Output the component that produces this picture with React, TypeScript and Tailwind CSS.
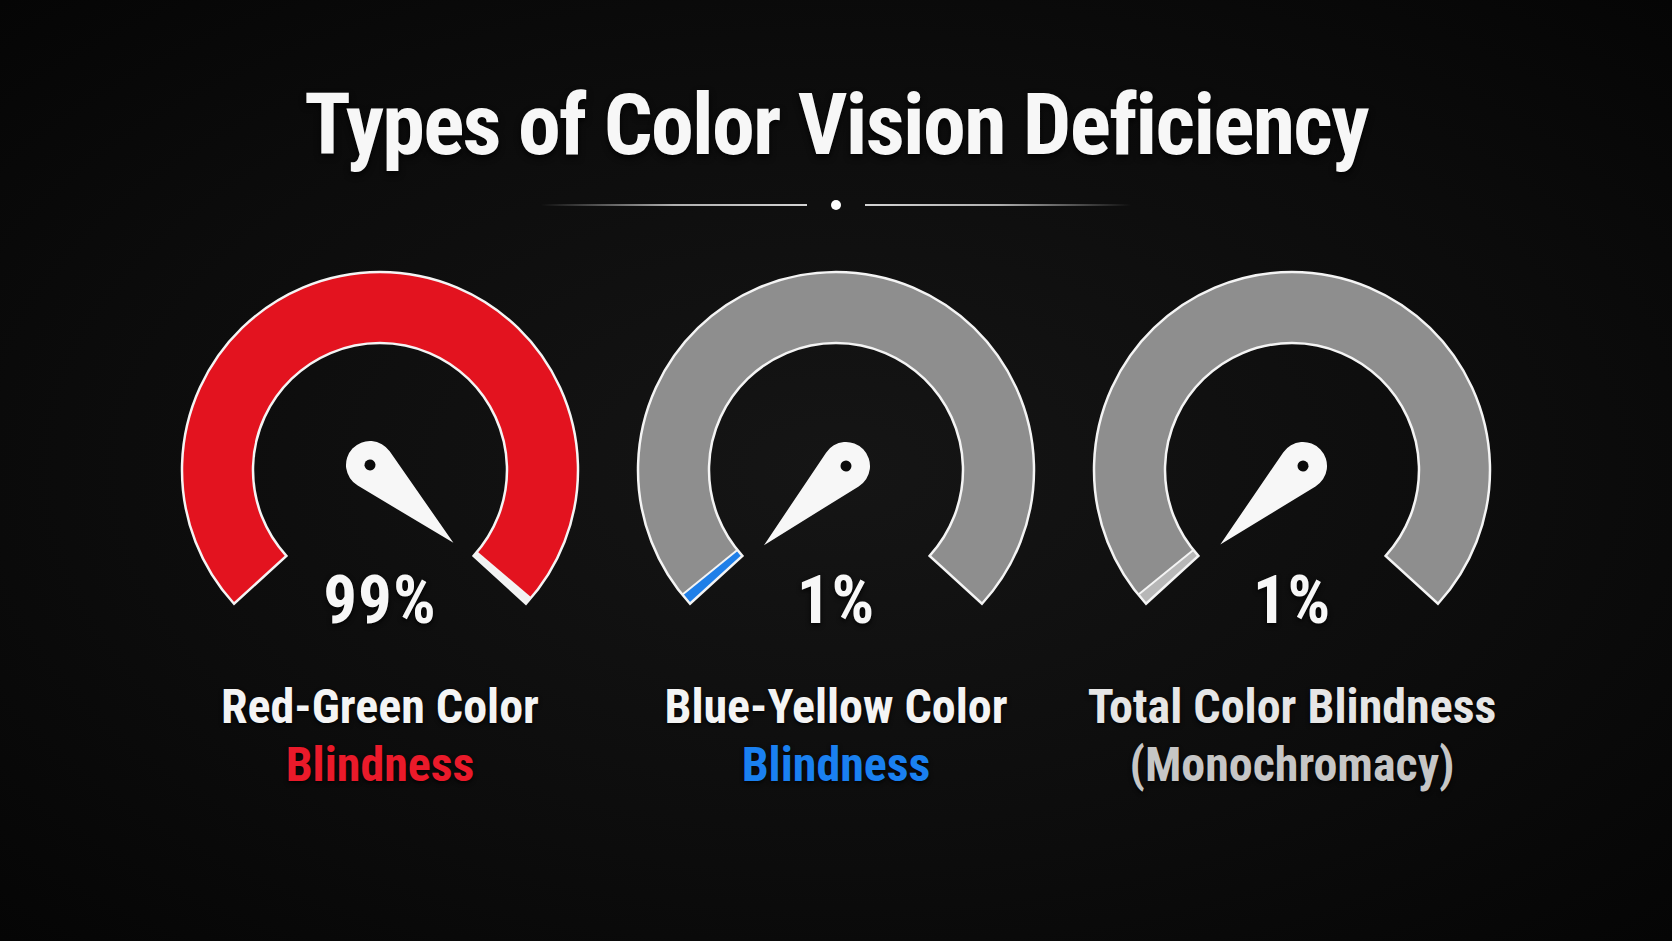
import React from "react";

type GaugeProps = {
    fillTo: number;
    base: string;
    fill: string;
    pivot: [number, number];
    needle: number;
};

const CX = 210;
const CY = 202;
const R_OUT = 198;
const R_IN = 127;
const START = 137.5;
const SWEEP = 265;

function pt(r: number, a: number) {
    const rad = (a * Math.PI) / 180;
    return [CX + r * Math.cos(rad), CY + r * Math.sin(rad)];
}

function band(a1: number, a2: number) {
    const large = a2 - a1 > 180 ? 1 : 0;
    const [x1, y1] = pt(R_OUT, a1);
    const [x2, y2] = pt(R_OUT, a2);
    const [x3, y3] = pt(R_IN, a2);
    const [x4, y4] = pt(R_IN, a1);
    return `M ${x1} ${y1} A ${R_OUT} ${R_OUT} 0 ${large} 1 ${x2} ${y2} L ${x3} ${y3} A ${R_IN} ${R_IN} 0 ${large} 0 ${x4} ${y4} Z`;
}

function Gauge({ fillTo, base, fill, pivot, needle }: GaugeProps) {
    const end = START + SWEEP;
    const split = START + SWEEP * fillTo;
    const [sx1, sy1] = pt(R_OUT, split);
    const [sx2, sy2] = pt(R_IN, split);
    return (
        <svg width="420" height="345" viewBox="0 0 420 345" className="block">
            <path d={band(START, end)} fill={base} />
            <path d={band(START, split)} fill={fill} />
            <line x1={sx1} y1={sy1} x2={sx2} y2={sy2} stroke="#f4f4f4" strokeWidth="2" />
            <path d={band(START, end)} fill="none" stroke="#f4f4f4" strokeWidth="2.5" />
            {/* needle: teardrop with a hole at the pivot */}
            <g transform={`translate(${CX + pivot[0]} ${CY + pivot[1]}) rotate(${needle})`}>
                <path d="M 114 0 L 5.05 23.46 A 24 24 0 1 1 5.05 -23.46 Z" fill="#f7f7f7" />
                <circle cx="0" cy="0" r="5.5" fill="#0b0b0b" />
            </g>
        </svg>
    );
}

const cond = { fontFamily: '"Roboto Condensed", Roboto, sans-serif' };

const gauges = [
    {
        fillTo: 0.992,
        base: "#f2f2f2",
        fill: "#e3131f",
        pivot: [-10, -5] as [number, number],
        needle: 43,
        value: "99%",
        line1: "Red-Green Color",
        line2: "Blindness",
        c1: "text-[#f4f4f4]",
        c2: "text-[#ea1a2a]",
    },
    {
        fillTo: 0.013,
        base: "#8e8e8e",
        fill: "#1f7fe8",
        pivot: [10, -4] as [number, number],
        needle: 136,
        value: "1%",
        line1: "Blue-Yellow Color",
        line2: "Blindness",
        c1: "text-[#f4f4f4]",
        c2: "text-[#1a80f0]",
    },
    {
        fillTo: 0.013,
        base: "#8e8e8e",
        fill: "#b7b7b7",
        pivot: [11, -4] as [number, number],
        needle: 136.5,
        value: "1%",
        line1: "Total Color Blindness",
        line2: "(Monochromacy)",
        c1: "text-[#e6e6e6]",
        c2: "text-[#c6c6c6]",
    },
];

export default function App() {
    return (
        <div className="h-[941px] w-full overflow-hidden bg-[radial-gradient(ellipse_at_center,#151515_0%,#0c0c0c_60%,#050505_100%)] text-white flex flex-col items-center">
            <h1
                className="mt-[82px] text-[86px] leading-none font-bold tracking-[-0.02em] text-[#f7f7f7] [text-shadow:0_3px_6px_rgba(0,0,0,0.8)]"
                style={cond}
            >
                Types of Color Vision Deficiency
            </h1>

            <div className="mt-[32px] flex items-center gap-[24px]">
                <div className="h-[2px] w-[266px] bg-gradient-to-r from-transparent via-[#b0b0b0] to-[#d4d4d4]" />
                <div className="h-[10px] w-[10px] rounded-full bg-white" />
                <div className="h-[2px] w-[266px] bg-gradient-to-l from-transparent via-[#b0b0b0] to-[#d4d4d4]" />
            </div>

            <div className="mt-[58px] flex justify-center">
                {gauges.map((g) => (
                    <div key={g.line1} className="w-[456px] flex flex-col items-center">
                        <Gauge fillTo={g.fillTo} base={g.base} fill={g.fill} pivot={g.pivot} needle={g.needle} />
                        <div
                            className="-mt-[46px] text-[67px] leading-none font-bold tracking-[1px] text-[#f7f7f7] [text-shadow:0_2px_5px_rgba(0,0,0,0.9)]"
                            style={cond}
                        >
                            {g.value}
                        </div>
                        <div
                            className="mt-[44px] text-[48px] leading-[58px] font-bold text-center [text-shadow:0_2px_4px_rgba(0,0,0,0.8)]"
                            style={cond}
                        >
                            <div className={g.c1}>{g.line1}</div>
                            <div className={g.c2}>{g.line2}</div>
                        </div>
                    </div>
                ))}
            </div>
        </div>
    );
}
